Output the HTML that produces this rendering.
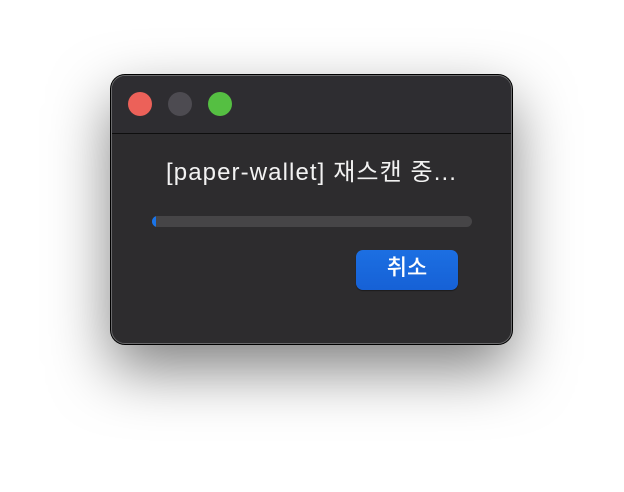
<!DOCTYPE html>
<html><head><meta charset="utf-8"><style>
html,body{margin:0;padding:0;width:624px;height:492px;background:#fff;overflow:hidden}
.win{position:absolute;left:111px;top:75px;width:401px;height:269px;box-sizing:border-box;border-radius:14px;background:#2d2c2e;border:1px solid #6a6a6c;box-shadow:0 25px 60px rgba(0,0,0,.5),0 0 0 1px #000;overflow:hidden}
.tb{position:absolute;left:0;top:0;right:0;height:57px;background:#2e2d31;border-bottom:1px solid #0e0e0e}
.d{position:absolute;top:16px;width:24px;height:24px;border-radius:50%}
.t{position:absolute;left:0;right:0;top:76px;text-align:center;color:#f2f2f2;font:24px "Liberation Sans","Noto Sans CJK KR",sans-serif;letter-spacing:1.1px}
.pb{position:absolute;left:40px;top:140px;width:320px;height:11px;border-radius:6px;background:#464547;overflow:hidden}
.pb i{position:absolute;left:0;top:0;width:4px;height:11px;background:#1a74e8}
.btn{position:absolute;left:244px;top:174px;width:102px;height:40px;border-radius:7px;background:linear-gradient(#1c6fe2,#1661d6);color:#fff;text-align:center;line-height:42px;font:500 22px "Liberation Sans","Noto Sans CJK KR",sans-serif;box-shadow:0 1px 1px rgba(0,0,0,.4)}
</style></head><body>
<div class="win">
<div class="tb">
<div class="d" style="left:16px;background:#ec6159"></div>
<div class="d" style="left:56px;background:#4d4b51"></div>
<div class="d" style="left:96px;background:#55bf42"></div>
</div>
<div class="t">[paper-wallet] 재스캔 중...</div>
<div class="pb"><i></i></div>
<div class="btn">취소</div>
</div>
</body></html>
